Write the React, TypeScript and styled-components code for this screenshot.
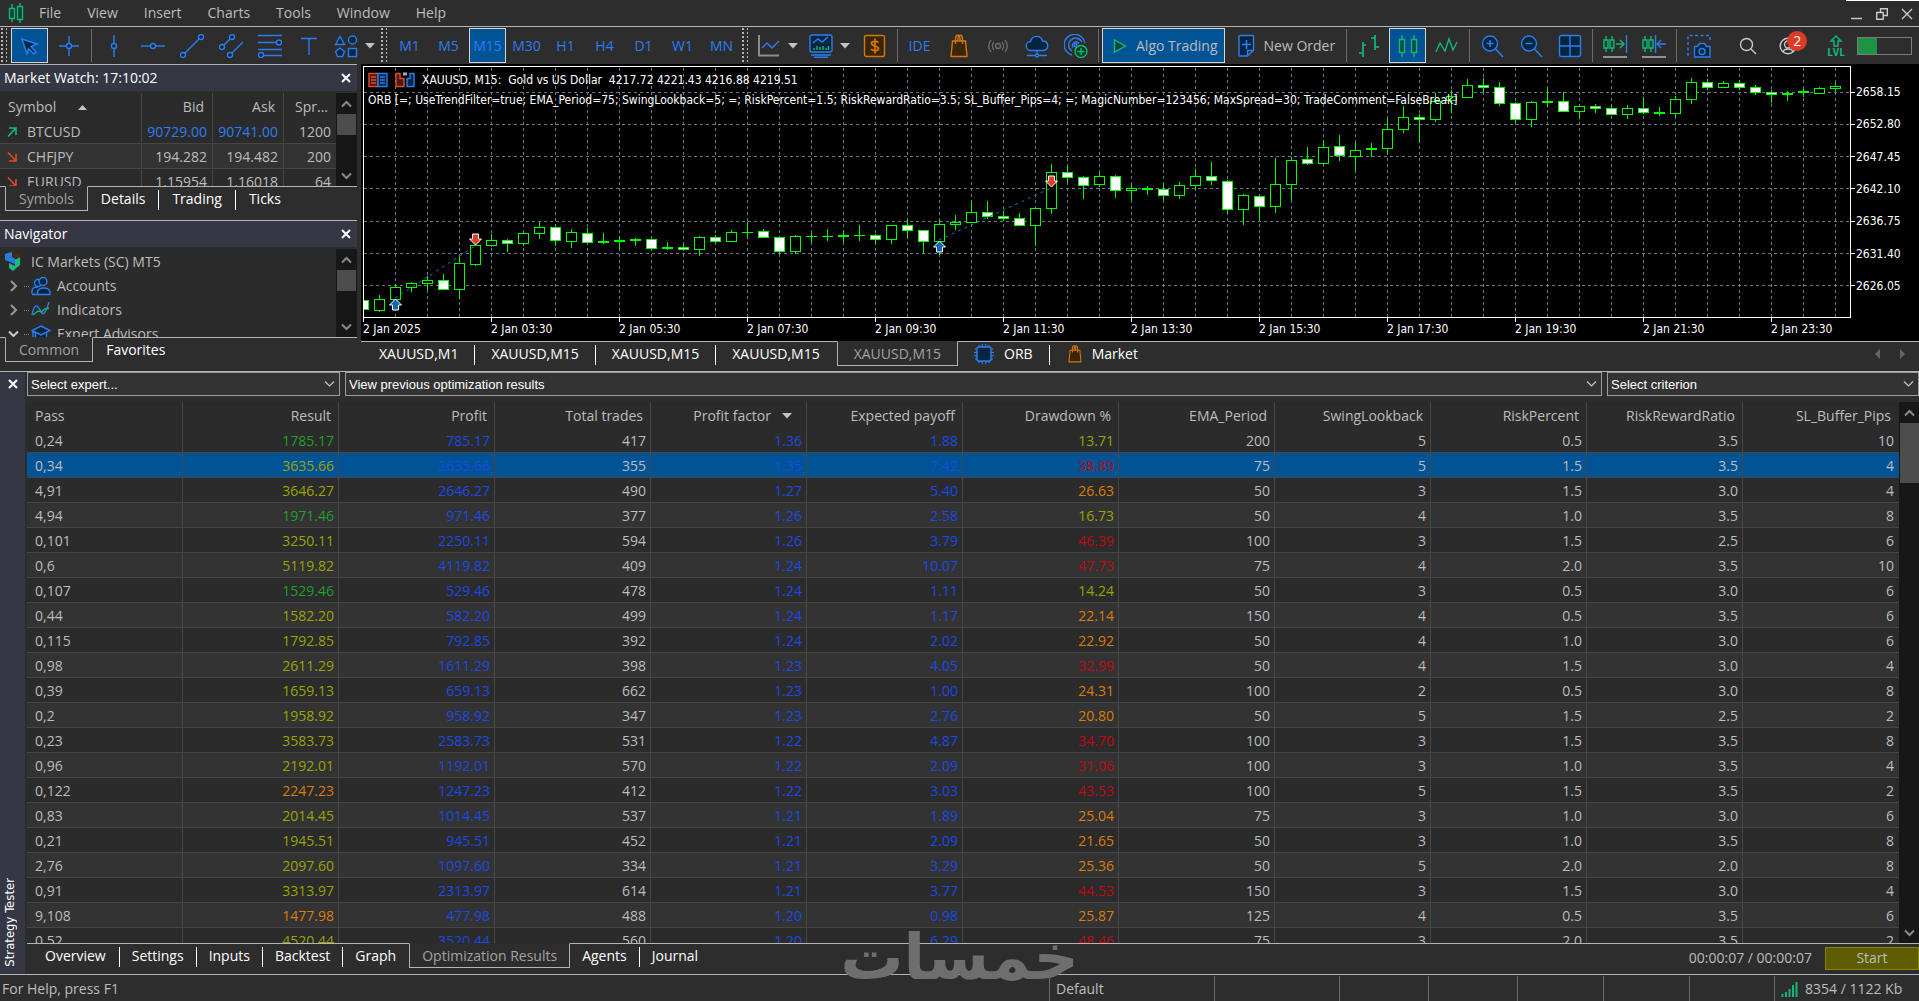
import React from "react";
import styled, { createGlobalStyle, css } from "styled-components";

const c = {
  bg: "#2d2d2d",
  panel: "#2b2b2b",
  alt: "#333333",
  grid: "#464646",
  line: "#b4b4b4",
  head: "#363744",
  text: "#bdbdbd",
  dim: "#a2a2a2",
  white: "#ffffff",
  sel: "#005496",
  blue: "#2b7df0",
  deep: "#04263f",
  green: "#13b877",
  orange: "#d2770f",
  brown: "#3a2506",
};

const ui = `"Open Sans", "Noto Sans", sans-serif`;
const cond = `"DejaVu Sans Condensed", "DejaVu Sans", sans-serif`;

const Global = createGlobalStyle`
  html, body { margin: 0; background: ${c.bg}; }
  * { box-sizing: border-box; }
  button, select, table { font: inherit; color: inherit; }
  button { background: none; border: 0; padding: 0; margin: 0; cursor: default; }
`;

const Page = styled.div`
  position: relative;
  display: flex;
  flex-direction: column;
  height: 100vh;
  overflow: hidden;
  background: ${c.bg};
  color: ${c.text};
  font: 14px/20px ${ui};
  white-space: nowrap;
`;

/* ---------- menu ---------- */
const MenuBar = styled.header`
  display: flex;
  align-items: center;
  height: 27px;
  padding-left: 8px;
  border-bottom: 1px solid ${c.line};
`;
const MenuItems = styled.nav`
  display: flex;
  margin-left: 2px;
`;
const MenuItem = styled.button`
  padding: 0 13px;
`;
const WindowButtons = styled.div`
  display: flex;
  align-items: center;
  align-self: stretch;
  gap: 13px;
  margin-left: auto;
  padding: 0 6px 0 5px;
  border-top: 1px solid ${c.white};
`;
const IconButton = styled.button`
  display: flex;
`;

/* ---------- toolbar ---------- */
const ToolBar = styled.div`
  display: flex;
  align-items: center;
  height: 37px;
`;
const Grip = styled.div`
  width: 10px;
  height: 36px;
  padding-left: 1px;
  display: flex;
  gap: 3px;
  &::before, &::after {
    content: "";
    width: 2px;
    background: repeating-linear-gradient(${c.line} 0 2px, transparent 2px 4px);
  }
  &::after { width: 1px; }
`;
const Tool = styled.button<{ $on?: boolean; $wide?: boolean }>`
  display: flex;
  align-items: center;
  justify-content: center;
  gap: 9px;
  width: ${(p) => (p.$wide ? "auto" : "37px")};
  height: 35px;
  padding: ${(p) => (p.$wide ? "0 6px 0 10px" : "0")};
  margin: 0 1px;
  border: 1px solid ${(p) => (p.$on ? "#d5d5d5" : "transparent")};
  background: ${(p) => (p.$on ? c.sel : "none")};
  svg { flex: none; }
`;
const Period = styled(Tool)`
  color: ${c.blue};
`;
const DropTool = styled.button`
  display: flex;
  align-items: center;
  gap: 7px;
  width: 52px;
  height: 35px;
  padding-left: 6px;
`;
const Sep = styled.div`
  width: 6px;
  height: 33px;
  padding-left: 3px;
  &::before {
    content: "";
    display: block;
    width: 1px;
    height: 100%;
    background: #6c6c6c;
  }
`;
const ToolRight = styled.div`
  display: flex;
  align-items: center;
  gap: 22px;
  margin-left: auto;
  padding-right: 7px;
`;
const Account = styled.button`
  position: relative;
  display: flex;
  width: 26px;
`;
const Badge = styled.span`
  position: absolute;
  top: -6px;
  left: 8px;
  width: 20px;
  height: 20px;
  border-radius: 50%;
  background: #dd3b26;
  color: ${c.white};
`;
const Level = styled.button`
  display: flex;
  flex-direction: column;
  align-items: center;
  color: ${c.green};
  font-size: 10px;
  line-height: 10px;
  font-weight: 700;
`;
const Battery = styled.div`
  width: 55px;
  height: 18px;
  margin-left: -10px;
  border: 1px solid #7d7d7d;
  &::before {
    content: "";
    display: block;
    width: 19px;
    height: 100%;
    background: #1d9443;
  }
`;

/* ---------- panels ---------- */
const Upper = styled.div`
  display: flex;
  flex: none;
  height: 307px;
`;
const Side = styled.aside`
  flex: none;
  width: 357px;
  margin-right: 4px;
`;
const Panel = styled.section`
  display: flex;
  flex-direction: column;
  border-top: 1px solid ${c.line};
`;
const PanelHead = styled.header`
  display: flex;
  align-items: center;
  justify-content: space-between;
  height: 26px;
  margin-bottom: 2px;
  padding: 0 6px 0 4px;
  background: ${c.head};
  color: ${c.white};
`;
const PanelBody = styled.div<{ $h: number }>`
  display: flex;
  height: ${(p) => p.$h}px;
  overflow: hidden;
  background: ${c.panel};
`;
const Scroll = styled.div<{ $thumb: number }>`
  flex: none;
  display: flex;
  flex-direction: column;
  align-items: center;
  width: ${(p) => (p.$thumb > 30 ? 20 : 21)}px;
  background: #171717;
  button {
    display: flex;
    align-items: center;
    justify-content: center;
    height: 21px;
  }
`;
const Thumb = styled.div<{ $h: number }>`
  width: 19px;
  height: ${(p) => p.$h}px;
  margin-bottom: auto;
  background: #4d4d4d;
`;

const TabRow = styled.div<{ $h: number; $x: number }>`
  display: flex;
  flex: none;
  align-items: flex-start;
  height: ${(p) => p.$h}px;
  padding-left: ${(p) => p.$x}px;
  border-top: 1px solid ${c.line};
  background: ${c.bg};
`;
const Tab = styled.button<{ $on?: boolean; $sep?: boolean; $pad?: number }>`
  display: flex;
  align-items: center;
  gap: 10px;
  padding: 0 ${(p) => p.$pad ?? 13}px 2px;
  color: ${c.white};
  height: 20px;
  margin-top: 3px;
  line-height: 18px;
  border-right: 1px solid ${(p) => (p.$sep ? c.white : "transparent")};
  ${(p) =>
    p.$on &&
    css`
      height: 25px;
      margin-top: -1px;
      padding-bottom: 0;
      color: ${c.dim};
      background: ${c.bg};
      border: 1px solid ${c.line};
      border-top-color: ${c.bg};
    `}
`;

/* ---------- market watch ---------- */
const Quotes = styled.table`
  flex: 1;
  width: 0;
  height: 101px;
  table-layout: fixed;
  border-collapse: separate;
  border-spacing: 0;
  th, td { height: 25px; padding: 1px 5px 0; text-align: right; font-weight: 400; border-right: 1px solid ${c.grid}; }
  th { height: 26px; padding: 2px 8px 0; }
  td { border-bottom: 1px solid ${c.grid}; }
  th:last-child, td:last-child { border-right: 0; }
  th:first-child, td:first-child { text-align: left; width: 142px; }
  td:first-child { padding-left: 7px; }
  th:nth-child(2), th:nth-child(3) { width: 71px; }
  tbody tr:nth-child(even) { background: ${c.alt}; }
`;
const QuoteName = styled.span`
  display: flex;
  align-items: center;
  gap: 10px;
`;
const SortHead = styled.span`
  display: inline-flex;
  align-items: center;
  gap: 22px;
`;
const BlueTd = styled.td<{ $blue?: boolean }>`
  color: ${(p) => (p.$blue ? c.blue : "inherit")};
`;

/* ---------- navigator ---------- */
const Tree = styled.ul`
  flex: 1;
  margin: 0;
  padding: 1px 0 0 4px;
  list-style: none;
`;
const TreeItem = styled.li<{ $root?: boolean }>`
  display: flex;
  align-items: center;
  height: 24px;
  gap: ${(p) => (p.$root ? 7 : 6)}px;
`;
const Dots = styled.span`
  width: 5px;
  margin-right: -4px;
  border-top: 1px dotted #888;
`;
const Twist = styled.button`
  display: flex;
  justify-content: center;
  width: 19px;
  margin-right: -5px;
`;

/* ---------- chart ---------- */
const ChartPane = styled.main`
  flex: 1;
  min-width: 0;
  display: flex;
  flex-direction: column;
`;
const Chart = styled.div`
  flex: 1;
  display: grid;
  grid-template-columns: minmax(0, 1fr) 68px;
  grid-template-rows: 252px 1fr;
  padding: 2px 0 0 2px;
  background: #000;
  color: ${c.white};
  font: 12px/16px ${cond};
`;
const Plot = styled.div`
  position: relative;
  border: 1px solid ${c.white};
  overflow: hidden;
  svg { display: block; }
`;
const ChartTitle = styled.div`
  position: absolute;
  left: 4px;
  top: 3px;
  white-space: pre;
`;
const TitleLine = styled.div`
  display: flex;
  align-items: center;
  gap: 7px;
  height: 20px;
  margin-bottom: 2px;
`;
const Prices = styled.div`
  display: flex;
  flex-direction: column;
  justify-content: space-between;
  height: 210px;
  margin-top: 18px;
`;
const Price = styled.div`
  display: flex;
  align-items: center;
  gap: 1px;
  &::before { content: ""; width: 4px; height: 1px; background: ${c.white}; }
`;
const Times = styled.div`
  display: flex;
  grid-column: 1 / 3;
`;
const Time = styled.div`
  flex: 0 0 128px;
  line-height: 14px;
  &::before { content: ""; display: block; width: 1px; height: 4px; background: ${c.white}; }
`;
const TabArrows = styled.div`
  display: flex;
  gap: 17px;
  margin: 5px 12px 0 auto;
`;

/* ---------- tester ---------- */
const Tester = styled.section`
  flex: 1;
  min-height: 0;
  display: flex;
  border-top: 1px solid ${c.line};
  border-bottom: 1px solid ${c.line};
`;
const Strip = styled.div`
  flex: none;
  display: flex;
  flex-direction: column;
  align-items: center;
  justify-content: space-between;
  width: 25px;
  margin-right: 2px;
  padding: 7px 0;
  background: ${c.head};
  color: ${c.white};
`;
const StripTitle = styled.h2`
  align-self: flex-start;
  margin: 0;
  font: 13px/20px ${cond};
  writing-mode: vertical-rl;
  transform: rotate(180deg);
`;
const TesterMain = styled.div`
  flex: 1;
  min-width: 0;
  display: flex;
  flex-direction: column;
`;
const Filters = styled.div`
  display: grid;
  grid-template-columns: 313px minmax(0, 1fr) 312px;
  gap: 5px;
  height: 30px;
`;
const SelectBox = styled.div`
  position: relative;
  height: 24px;
  svg { position: absolute; right: 5px; top: 8px; pointer-events: none; }
  select {
    appearance: none;
    display: block;
    width: 100%;
    height: 24px;
    padding: 1px 3px 0;
    color: ${c.white};
    background: ${c.alt};
    border: 1px solid #9c9c9c;
    border-radius: 0;
    font: 13px/20px "Liberation Sans", Arial, sans-serif;
  }
`;
const Results = styled.div`
  flex: 1 1 0;
  min-height: 0;
  display: flex;
  overflow: hidden;
  background: ${c.panel};
`;
const ResultTable = styled.table`
  flex: 1;
  width: 0;
  height: 551px;
  table-layout: fixed;
  border-collapse: separate;
  border-spacing: 0;
  th, td { height: 25px; padding: 2px 4px 0; text-align: right; font-weight: 400; border-right: 1px solid ${c.grid}; }
  th { height: 26px; padding: 2px 7px 0; }
  td { border-bottom: 1px solid ${c.grid}; }
  th:last-child, td:last-child { border-right: 0; padding-right: 5px; }
  th:last-child { padding-right: 8px; }
  th:first-child, td:first-child { text-align: left; padding-left: 8px; }
`;
const Row = styled.tr<{ $sel: boolean }>`
  &:nth-child(even) { background: ${(p) => (p.$sel ? c.sel : c.alt)}; }
`;
const Cell = styled.td<{ $color?: string }>`
  color: ${(p) => p.$color ?? "inherit"};
`;
const ProfitHead = styled(SortHead)`
  gap: 11px;
  padding-right: 7px;
`;
const Run = styled.div`
  display: flex;
  align-items: center;
  gap: 13px;
  height: 24px;
  margin: 2px 0 0 auto;
`;
const Start = styled.button`
  width: 94px;
  height: 23px;
  border: 1px solid #858500;
  background: #5d5d00;
  line-height: 20px;
`;
const Status = styled.footer`
  flex: none;
  display: flex;
  height: 26px;
  padding-top: 1px;
`;
const StatusCell = styled.div<{ $w?: number }>`
  display: flex;
  align-items: center;
  gap: 6px;
  ${(p) => (p.$w ? `flex: none; width: ${p.$w}px; border-left: 1px solid #6c6c6c; padding-left: 6px;` : "flex: 1; padding-left: 2px;")}
`;
const Mark = styled.div`
  position: absolute;
  left: 0;
  right: 0;
  bottom: 8px;
  text-align: center;
  pointer-events: none;
  color: #6e6e6e;
  font: 700 63px/70px "DejaVu Sans", sans-serif;
`;

/* ---------- icons ---------- */
type Kids = { children?: React.ReactNode; w?: number; h?: number; s?: string; f?: string };
const I = ({ children, w = 24, h = 24, s = c.blue, f = "none" }: Kids) => (
  <svg width={w} height={h} viewBox={`0 0 ${w} ${h}`} fill={f} stroke={s} strokeWidth="1.4" aria-hidden="true">
    {children}
  </svg>
);
const Logo = () => (
  <I w={16} h={20} s={c.green} f="#07442c">
    <path d="M4 1v4M4 16v3M12 0v3M12 17v3M1.500 5.500h5v10h-5zM9.500 3.500h5v13h-5z" />
  </I>
);
const Close = () => (
  <I w={10} h={10} s="#fff"><path d="M1 1l8 8M9 1l-8 8" strokeWidth="2" /></I>
);
const Down = () => <I w={10} h={6} s="none" f="#c4c4c4"><path d="M0 0h10l-5 5.500z" /></I>;
const SortUp = () => <I w={9} h={5} s="none" f="#c4c4c4"><path d="M0 5h9L4.500 0z" /></I>;
const Chev = ({ up, color = "#8a8a8a" }: { up?: boolean; color?: string }) => (
  <I w={11} h={8} s={color}><path d={up ? "M1 6.500l4.500-4.500 4.500 4.500" : "M1 1.500l4.500 4.500L10 1.500"} strokeWidth="2" /></I>
);
const Thin = () => <I w={11} h={8} s="#c4c4c4"><path d="M1 1.500l4.500 4.500L10 1.500" strokeWidth="1.200" /></I>;
const Cursor = () => <I f={c.deep}><path d="M4 5l15 5-6 2.500 5 5.500-2 2-5.500-5.500L9 20z" /></I>;
const Cross = () => <I f={c.deep}><path d="M12 2v20M2 12h20" /><circle cx="12" cy="12" r="2.500" /></I>;
const VLine = () => <I f={c.deep}><path d="M12 1v22" /><circle cx="12" cy="12" r="2.500" /></I>;
const HLine = () => <I f={c.deep}><path d="M0 12h24" /><circle cx="12" cy="12" r="2.500" /></I>;
const Trend = () => <I f={c.deep}><path d="M4 20L20 4" /><circle cx="3" cy="21" r="2.500" /><circle cx="21" cy="3" r="2.500" /></I>;
const Channel = () => (
  <I f={c.deep}><path d="M4 12l8-8M12 20L24 8" /><circle cx="3" cy="13" r="2.500" /><circle cx="13" cy="3" r="2.500" /><circle cx="11" cy="21" r="2.500" /></I>
);
const Fib = () => (
  <I f={c.deep}><path d="M0 1.500h24M0 8.500h19M0 15.500h24M5 21.500h19" /><circle cx="21" cy="8.500" r="2.500" /><circle cx="3" cy="21" r="2.500" /></I>
);
const TIcon = () => <I><path d="M4 4.500h16M12 4.500V21" /></I>;
const Shapes = () => (
  <I f={c.deep}><path d="M6 2.500l4.500 8h-9zM14.500 14.500h8v8h-8zM6 14l4.500 3.500-2 5h-5l-2-5z" /><circle cx="18.500" cy="6" r="4" /></I>
);
const LineChart = () => (
  <I><path d="M2 1v20.500h20" stroke="#8c8c8c" strokeWidth="2" /><path d="M5 14l5-5 5 5 7-7" /></I>
);
const Monitor = () => (
  <I><rect x="1" y="1" width="22" height="17" rx="2" fill={c.deep} /><path d="M2 21h20M5 23.300h14M4 9l5-4 4 3 6-5" />
    <path d="M5 16v-2M8 16v-4M11 16v-3M14 16v-4M17 16v-2M19.500 16v-4" stroke={c.green} /></I>
);
const Dollar = () => (
  <I s={c.orange} f={c.brown}><rect x="1.500" y="1.500" width="20" height="21" rx="2" />
    <path d="M15.500 8.500c-1-1.500-7-2-7 1s7 2 7 5-6 2.500-7.500.5M12 4.500v15" fill="none" strokeWidth="1.800" /></I>
);
const Bag = ({ w = 18, h = 24 }: { w?: number; h?: number }) => (
  <svg width={w} height={h} viewBox="0 0 18 24" fill={c.brown} stroke={c.orange} strokeWidth="1.400" aria-hidden="true">
    <path d="M2.500 7h13L17 22.500H1z" />
    <path d="M5.500 10V4.500c0-4.500 4.500-4.500 4.500 0V7M8 7V4.500c0-4.500 4.500-4.500 4.500 0V10" fill="none" />
  </svg>
);
const Signal = () => (
  <I s="#6c6c6c"><circle cx="12" cy="12" r="2.500" /><path d="M8 8a6 6 0 000 8M16 8a6 6 0 010 8M5 6a9 9 0 000 12M19 6a9 9 0 010 12" /></I>
);
const Cloud = () => (
  <I f={c.deep}><path d="M6 16.500a4.500 4.500 0 01-.5-9C7 1 16 .5 17.500 7c7 0 6.500 9.500 1 9.500zM12 16.500V20M2 21.500h20" /><circle cx="12" cy="21.500" r="1.500" /></I>
);
const Radar = () => (
  <I><path d="M8 21A10.500 10.500 0 1121 9M8 17a7 7 0 1110-9M9 13.500a3.500 3.500 0 116-4" /><circle cx="11.500" cy="11" r="1.500" />
    <circle cx="17" cy="17.500" r="6" stroke={c.green} fill="#063d29" /><path d="M17 14v7M13.500 17.500h7" stroke={c.green} /></I>
);
const Play = () => <I w={14} h={16} s={c.green} f="#0b4a3a"><path d="M1.500 2l11 6-11 6z" /></I>;
const Order = () => (
  <I w={17} f={c.deep}><path d="M2 1.500h13.500v15l-6 5.500H2a1 1 0 01-1-1V2.500a1 1 0 011-1zM15.500 16.500h-6V22" /><path d="M8.500 6v9M4 10.500h9" strokeWidth="1.600" /></I>
);
const Bars = () => <I s={c.green}><path d="M6 8v15M2 19h4M6 11h3M18 1v15M14 4h4M18 13h4" strokeWidth="1.700" /></I>;
const Candles = () => <I s={c.green} f="#0a4a44"><path d="M6 1v5M6 18v5M18 1v5M18 18v5M3.500 5.500h5v13h-5zM15.500 5.500h5v13h-5z" /></I>;
const Wave = () => <I s={c.green}><path d="M1 18l4-9 5 8 4-12 4 11 4-8" /></I>;
const Lens = ({ plus }: { plus?: boolean }) => (
  <I><circle cx="10" cy="9.500" r="7.500" fill={c.deep} /><path d={`M15.500 15l7.500 8M6.500 9.500h7${plus ? "M10 6v7" : ""}`} strokeWidth="1.600" /></I>
);
const Tile = () => <I f={c.deep}><rect x="1.500" y="1.500" width="21" height="21" rx="2" /><path d="M12 1.500v21M1.500 12h21" /></I>;
const Shift = ({ back }: { back?: boolean }) => (
  <I w={26} h={26} s={c.green}>
    <path d="M4 3v4M4 15v4M10 3v4M10 15v4M2 7h4v8H2zM8 7h4v8H8z" fill="#07442c" />
    {back ? <path d="M14.500 2v18M25 11h-8M20 7l-4 4 4 4" stroke={c.blue} /> : <path d="M14 11h7M18 7l4 4-4 4" />}
    {!back && <path d="M24.500 2v18" stroke={c.blue} />}
    <path d="M1 24h24" stroke="#aaa" strokeWidth="1.600" />
  </I>
);
const Camera = () => (
  <I><path d="M1 22V1.500h22V8" strokeDasharray="3 2.500" /><path d="M7.500 12.500h3l2-3h5l2 3h3.500v10.500h-15.500z" fill={c.deep} /><circle cx="15" cy="17.500" r="3" /></I>
);
const Search = () => <I w={18} h={18} s="#c8c8c8"><circle cx="7.500" cy="7.500" r="6" /><path d="M12 12l5 5" /></I>;
const Person = () => (
  <I w={18} h={18} s="#c8c8c8"><circle cx="9" cy="9" r="7.800" /><circle cx="9" cy="7.500" r="3.500" /><path d="M4 15c1-4 9-4 10 0" /></I>
);
const LvlArrow = () => <I w={14} h={12} s={c.green}><path d="M7 1l5 5H9v5H5V6H2z" /></I>;
const Chip = () => (
  <I w={20} h={20} f={c.deep}><path d="M5 1v18M8.300 0v20M11.700 0v20M15 1v18M1 5h18M0 8.300h20M0 11.700h20M1 15h18" strokeWidth="1.200" /><rect x="3" y="3" width="14" height="14" rx="2" /></I>
);
const QuoteArrow = ({ up }: { up?: boolean }) => (
  <I w={10} h={10} s={up ? c.green : "#dd4a2c"}><path d={up ? "M1 9.500L9 1M2 1h7v7" : "M1 .5L9 9M9 2v7H2"} strokeWidth="1.600" /></I>
);
const Broker = () => (
  <I w={20} h={20} s="none">
    <path d="M8 1l9 1v5l-9-3z" fill="#4a2c0c" />
    <path d="M1 2l6-2 1 1v4l5 3v5L1 8z" fill="#2b7ad6" />
    <path d="M11 8l5-3v8l-7 6-4-3v-5l6 3z" fill="#15b983" />
  </I>
);
const People = () => (
  <I w={20} h={20} f={c.deep}><circle cx="7" cy="7" r="3.500" /><path d="M1 18v-3c0-3 3-4 6-4" /><circle cx="12" cy="5.500" r="4" /><path d="M6.500 18.500v-2c0-6 12.500-6 12.500 0v2zM1 18.500h6" /></I>
);
const Indic = () => (
  <I w={20} h={20}><path d="M1 15c2-11 5-11 8-5s5 5 9-8" /><path d="M2 15l5-4 3 1 4-3 4-1" stroke={c.green} /></I>
);
const Cap = () => <I w={20} h={20} f={c.deep}><path d="M10 2l9 4.500-9 4.500-9-4.500zM4.500 9v7c3 2 8 2 11 0V9M2 7v8" /></I>;

/* ---------- candle data: type, high, low, body top, body bottom ---------- */
const candles: [string, number, number, number, number][] = [
  ["f",300,310,300,310],["h",295,312,299,311],["h",285,300,287,300],["h",282,292,283,288],["h",276,290,280,284],["f",274,290,280,290],
  ["h",256,299,263,290],["h",245,266,245,265],["h",234,247,240,246],["f",239,252,240,244],["h",232,246,233,244],["h",222,239,227,234],
  ["f",226,246,227,241],["h",229,248,232,242],["f",228,243,233,243],["d",233,244,241,243],["d",236,249,240,242],["d",238,246,239,241],
  ["f",239,250,239,249],["d",242,250,247,249],["f",244,250,247,250],["h",236,256,237,250],["f",235,243,237,242],["h",230,242,232,242],
  ["d",222,237,232,233],["f",229,238,231,238],["f",237,253,237,252],["h",235,254,236,252],["d",233,242,236,237],["d",229,241,236,237],
  ["d",231,242,235,237],["d",225,241,235,236],["f",234,244,235,240],["h",225,244,225,240],["f",219,238,225,231],["f",230,254,230,242],
  ["h",220,255,224,242],["h",215,230,222,225],["h",202,223,212,223],["f",201,219,212,217],["f",211,221,216,219],["f",213,226,218,226],
  ["h",208,246,208,226],["h",164,214,172,209],["f",167,183,172,178],["f",176,199,177,186],["h",173,187,176,185],["f",175,198,176,191],
  ["h",184,200,188,191],["d",186,195,188,190],["f",184,200,189,196],["h",182,199,185,196],["h",169,189,176,186],["f",162,185,176,181],
  ["f",180,213,181,210],["h",194,225,195,210],["f",195,220,196,207],["h",158,213,184,207],["h",157,200,160,185],["f",147,165,159,164],
  ["h",140,165,147,164],["f",135,161,146,156],["h",143,171,150,157],["d",143,157,148,150],["h",119,153,129,149],["h",106,133,117,130],
  ["f",114,142,117,120],["h",93,122,101,120],["h",90,113,96,101],["h",79,98,85,98],["f",78,93,85,88],["f",82,106,87,104],
  ["f",102,123,103,120],["h",101,127,102,120],["d",88,107,101,103],["f",92,112,101,112],["h",104,119,106,112],["f",104,113,106,109],
  ["f",105,115,108,115],["h",105,119,108,115],["f",97,114,108,113],["d",107,116,112,114],["h",96,117,99,114],["h",78,104,82,100],
  ["f",79,90,82,88],["h",81,88,83,88],["f",80,90,83,88],["f",85,95,87,93],["f",90,103,92,95],["d",91,101,93,95],["d",89,97,91,93],
  ["h",87,94,88,94],["h",83,92,86,89],
];
const gridX = Array.from({ length: 46 }, (_, i) => 395 + i * 32);
const gridY = [92, 124, 156, 188, 221, 253, 285];
const lime = "#00ff00";

const BuyMark = ({ x, y }: { x: number; y: number }) => (
  <path d={`M${x} ${y}l6 6h-3v5h-6v-5h-3z`} fill="#1167b1" stroke="#fff" />
);
const SellMark = ({ x, y }: { x: number; y: number }) => (
  <path d={`M${x} ${y}l6-6h-3v-5h-6v5h-3z`} fill="#e03c28" stroke="#fff" />
);

const CandleChart = () => (
  <svg width="100%" height="250" role="img" aria-label="XAUUSD M15 candles">
    <g transform="translate(-364 -67)" shapeRendering="crispEdges">
      <g stroke="#6c7b8a" strokeWidth="1" strokeDasharray="3 3">
        {gridX.map((x) => <line key={x} x1={x + 0.5} x2={x + 0.5} y1="68" y2="317" />)}
        {gridY.map((y) => <line key={y} x1="364" x2="1850" y1={y + 0.5} y2={y + 0.5} />)}
      </g>
      {candles.map(([t, hi, lo, a, b], i) => {
        const x = 363 + i * 16;
        return (
          <g key={i}>
            <rect x={x} y={hi} width="1" height={lo - hi} fill={lime} />
            <rect x={x - 5} y={a} width="11" height={b - a} fill={lime} />
            {t !== "d" && <rect x={x - 4} y={a + 1} width="9" height={b - a - 2} fill={t === "f" ? "#fff" : "#000"} />}
          </g>
        );
      })}
    </g>
    <g transform="translate(-364 -67)">
      <path d="M395 298L475 246M939 240L1051 188" stroke="#1f6fb5" strokeWidth="1" strokeDasharray="3 4" />
      <BuyMark x={395.5} y={299} />
      <SellMark x={475.5} y={245} />
      <BuyMark x={939.5} y={241} />
      <SellMark x={1051.5} y={187} />
    </g>
  </svg>
);

/* ---------- results ---------- */
const G = "#229f2c", Y = "#9aa300", O = "#da7d08", R = "#bd0a12", B = "#1b49e4";
const headers = ["Pass", "Result", "Profit", "Total trades", "Profit factor", "Expected payoff", "Drawdown %", "EMA_Period", "SwingLookback", "RiskPercent", "RiskRewardRatio", "SL_Buffer_Pips"];
const results: [string, string, string][] = [
  ["0,24 1785.17 785.17 417 1.36 1.88 13.71 200 5 0.5 3.5 10", G, Y],
  ["0,34 3635.66 2635.66 355 1.35 7.42 38.89 75 5 1.5 3.5 4", Y, R],
  ["4,91 3646.27 2646.27 490 1.27 5.40 26.63 50 3 1.5 3.0 4", Y, O],
  ["4,94 1971.46 971.46 377 1.26 2.58 16.73 50 4 1.0 3.5 8", G, Y],
  ["0,101 3250.11 2250.11 594 1.26 3.79 46.39 100 3 1.5 2.5 6", Y, R],
  ["0,6 5119.82 4119.82 409 1.24 10.07 47.73 75 4 2.0 3.5 10", Y, R],
  ["0,107 1529.46 529.46 478 1.24 1.11 14.24 50 3 0.5 3.0 6", G, Y],
  ["0,44 1582.20 582.20 499 1.24 1.17 22.14 150 4 0.5 3.5 6", Y, O],
  ["0,115 1792.85 792.85 392 1.24 2.02 22.92 50 4 1.0 3.0 6", Y, O],
  ["0,98 2611.29 1611.29 398 1.23 4.05 32.99 50 4 1.5 3.0 4", Y, R],
  ["0,39 1659.13 659.13 662 1.23 1.00 24.31 100 2 0.5 3.0 8", Y, O],
  ["0,2 1958.92 958.92 347 1.23 2.76 20.80 50 5 1.5 2.5 2", Y, O],
  ["0,23 3583.73 2583.73 531 1.22 4.87 34.70 100 3 1.5 3.5 8", Y, R],
  ["0,96 2192.01 1192.01 570 1.22 2.09 31.06 100 3 1.0 3.5 4", Y, R],
  ["0,122 2247.23 1247.23 412 1.22 3.03 43.53 100 5 1.5 3.5 2", O, R],
  ["0,83 2014.45 1014.45 537 1.21 1.89 25.04 75 3 1.0 3.0 6", Y, O],
  ["0,21 1945.51 945.51 452 1.21 2.09 21.65 50 3 1.0 3.5 8", Y, O],
  ["2,76 2097.60 1097.60 334 1.21 3.29 25.36 50 5 2.0 2.0 8", Y, O],
  ["0,91 3313.97 2313.97 614 1.21 3.77 44.53 150 3 1.5 3.0 4", Y, R],
  ["9,108 1477.98 477.98 488 1.20 0.98 25.87 125 4 0.5 3.5 6", O, O],
  ["0,52 4520.44 3520.44 560 1.20 6.29 48.46 75 3 2.0 3.5 2", Y, R],
];
const cellColor = (i: number, res: string, dd: string) =>
  i === 1 ? res : i === 6 ? dd : i === 2 || i === 4 || i === 5 ? B : undefined;

const ScrollBar = ({ thumb }: { thumb: number }) => (
  <Scroll $thumb={thumb}>
    <button aria-label="Scroll up"><Chev up /></button>
    <Thumb $h={thumb} />
    <button aria-label="Scroll down"><Chev /></button>
  </Scroll>
);

const drawTools: [string, () => React.JSX.Element][] = [
  ["Vertical line", VLine], ["Horizontal line", HLine], ["Trendline", Trend], ["Channel", Channel], ["Fibonacci", Fib], ["Text", TIcon],
];

export default function App() {
  return (
    <Page>
      <Global />
      <MenuBar>
        <Logo />
        <MenuItems>
          {["File", "View", "Insert", "Charts", "Tools", "Window", "Help"].map((m) => <MenuItem key={m}>{m}</MenuItem>)}
        </MenuItems>
        <WindowButtons>
          <IconButton aria-label="Minimize"><I w={12} h={12} s="#ccc"><path d="M0 10.500h11" /></I></IconButton>
          <IconButton aria-label="Restore"><I w={12} h={12} s="#ccc"><path d="M4.500 4V.7h6.800v6.800H7.500M.7 4.500h6.500v6.800H.7z" /></I></IconButton>
          <IconButton aria-label="Close"><I w={12} h={12} s="#ccc"><path d="M1 1l10 10M11 1L1 11" /></I></IconButton>
        </WindowButtons>
      </MenuBar>

      <ToolBar>
        <Grip />
        <Tool $on aria-label="Cursor"><Cursor /></Tool>
        <Tool aria-label="Crosshair"><Cross /></Tool>
        <Sep />
        {drawTools.map(([n, Ic]) => <Tool key={n} aria-label={n}><Ic /></Tool>)}
        <DropTool aria-label="Objects"><Shapes /><Down /></DropTool>
        <Grip />
        {["M1", "M5", "M15", "M30", "H1", "H4", "D1", "W1", "MN"].map((p) => <Period key={p} $on={p === "M15"}>{p}</Period>)}
        <Grip />
        <DropTool aria-label="Chart type"><LineChart /><Down /></DropTool>
        <DropTool aria-label="Templates"><Monitor /><Down /></DropTool>
        <Tool aria-label="Quotes"><Dollar /></Tool>
        <Sep />
        <Period>IDE</Period>
        <Tool aria-label="Market"><Bag /></Tool>
        <Tool aria-label="Signals"><Signal /></Tool>
        <Tool aria-label="VPS"><Cloud /></Tool>
        <Tool aria-label="Copy"><Radar /></Tool>
        <Sep />
        <Tool $on $wide><Play />Algo Trading</Tool>
        <Tool $wide><Order />New Order</Tool>
        <Sep />
        <Tool aria-label="Bars"><Bars /></Tool>
        <Tool $on aria-label="Candles"><Candles /></Tool>
        <Tool aria-label="Line"><Wave /></Tool>
        <Sep />
        <Tool aria-label="Zoom in"><Lens plus /></Tool>
        <Tool aria-label="Zoom out"><Lens /></Tool>
        <Tool aria-label="Tile windows"><Tile /></Tool>
        <Sep />
        <Tool aria-label="Scroll to end"><Shift /></Tool>
        <Tool aria-label="Shift chart"><Shift back /></Tool>
        <Sep />
        <Tool aria-label="Screenshot"><Camera /></Tool>
        <ToolRight>
          <IconButton aria-label="Search"><Search /></IconButton>
          <Account aria-label="Account"><Person /><Badge>2</Badge></Account>
          <Level><LvlArrow />LVL</Level>
          <Battery />
        </ToolRight>
      </ToolBar>

      <Upper>
        <Side>
          <Panel>
            <PanelHead><span>Market Watch: 17:10:02</span><IconButton aria-label="Close Market Watch"><Close /></IconButton></PanelHead>
            <PanelBody $h={93}>
              <Quotes>
                <thead>
                  <tr><th><SortHead>Symbol<SortUp /></SortHead></th><th>Bid</th><th>Ask</th><th>Spr...</th></tr>
                </thead>
                <tbody>
                  {[["BTCUSD", "90729.00", "90741.00", "1200"], ["CHFJPY", "194.282", "194.482", "200"], ["EURUSD", "1.15954", "1.16018", "64"]].map((q, i) => (
                    <tr key={q[0]}>
                      <td><QuoteName><QuoteArrow up={i === 0} />{q[0]}</QuoteName></td>
                      <BlueTd $blue={i === 0}>{q[1]}</BlueTd>
                      <BlueTd $blue={i === 0}>{q[2]}</BlueTd>
                      <td>{q[3]}</td>
                    </tr>
                  ))}
                </tbody>
              </Quotes>
              <ScrollBar thumb={21} />
            </PanelBody>
            <TabRow $h={34} $x={5}>
              <Tab $on>Symbols</Tab><Tab $sep>Details</Tab><Tab $sep>Trading</Tab><Tab>Ticks</Tab>
            </TabRow>
          </Panel>
          <Panel>
            <PanelHead><span>Navigator</span><IconButton aria-label="Close Navigator"><Close /></IconButton></PanelHead>
            <PanelBody $h={88}>
              <Tree>
                <TreeItem $root><Broker />IC Markets (SC) MT5</TreeItem>
                <TreeItem><Twist aria-label="Expand"><I w={8} h={12} s="#999"><path d="M1 1l5 5-5 5" strokeWidth="2" /></I></Twist><Dots /><People />Accounts</TreeItem>
                <TreeItem><Twist aria-label="Expand"><I w={8} h={12} s="#999"><path d="M1 1l5 5-5 5" strokeWidth="2" /></I></Twist><Dots /><Indic />Indicators</TreeItem>
                <TreeItem><Twist aria-label="Collapse"><Chev color="#ccc" /></Twist><Dots /><Cap />Expert Advisors</TreeItem>
              </Tree>
              <ScrollBar thumb={21} />
            </PanelBody>
            <TabRow $h={34} $x={5}><Tab $on>Common</Tab><Tab>Favorites</Tab></TabRow>
          </Panel>
        </Side>

        <ChartPane>
          <Chart>
            <Plot>
              <CandleChart />
              <ChartTitle>
                <TitleLine>
                  <I w={20} h={16} s="#e0492c" f="#4a1c10"><path d="M1 1.500h9v13H1zM3 5h5M3 8h5M3 11h5" /><path d="M10 1.500h9v13h-9zM12 5h5M12 8h5M12 11h5" stroke={c.blue} fill={c.deep} /></I>
                  <I w={20} h={16} s="#e0492c" f="#4a1c10"><path d="M1 1.500h4v5h4v8H1z" /><path d="M19 1.500h-4v5h-3v8h7z" stroke={c.blue} fill={c.deep} /><path d="M8 2h4" stroke="#aaa" strokeWidth="3" /></I>
                  <span>XAUUSD, M15:  Gold vs US Dollar  4217.72 4221.43 4216.88 4219.51</span>
                </TitleLine>
                <div>ORB [=; UseTrendFilter=true; EMA_Period=75; SwingLookback=5; =; RiskPercent=1.5; RiskRewardRatio=3.5; SL_Buffer_Pips=4; =; MagicNumber=123456; MaxSpread=30; TradeComment=FalseBreak]</div>
              </ChartTitle>
            </Plot>
            <Prices>
              {["2658.15", "2652.80", "2647.45", "2642.10", "2636.75", "2631.40", "2626.05"].map((p) => <Price key={p}>{p}</Price>)}
            </Prices>
            <Times>
              {["2025", "03:30", "05:30", "07:30", "09:30", "11:30", "13:30", "15:30", "17:30", "19:30", "21:30", "23:30"].map((t) => <Time key={t}>2 Jan {t}</Time>)}
            </Times>
          </Chart>
          <TabRow $h={30} $x={2}>
            <Tab $pad={16} $sep>XAUUSD,M1</Tab>
            <Tab $pad={16} $sep>XAUUSD,M15</Tab>
            <Tab $pad={16} $sep>XAUUSD,M15</Tab>
            <Tab $pad={16}>XAUUSD,M15</Tab>
            <Tab $pad={16} $on>XAUUSD,M15</Tab>
            <Tab $pad={16} $sep><Chip />ORB</Tab>
            <Tab $pad={18}><Bag w={14} h={18} />Market</Tab>
            <TabArrows>
              <I w={8} h={14} s="none" f="#666"><path d="M6 2v10L1 7z" /></I>
              <I w={8} h={14} s="none" f="#666"><path d="M1 2v10l5-5z" /></I>
            </TabArrows>
          </TabRow>
        </ChartPane>
      </Upper>

      <Tester>
        <Strip>
          <IconButton aria-label="Close Strategy Tester"><Close /></IconButton>
          <StripTitle>Strategy Tester</StripTitle>
        </Strip>
        <TesterMain>
          <Filters>
            {[["Expert", "Select expert..."], ["Mode", "View previous optimization results"], ["Criterion", "Select criterion"]].map(([l, v]) => (
              <SelectBox key={l}><select aria-label={l}><option>{v}</option></select><Thin /></SelectBox>
            ))}
          </Filters>
          <Results>
            <ResultTable>
              <thead>
                <tr>{headers.map((h) => <th key={h}>{h === "Profit factor" ? <ProfitHead>{h}<Down /></ProfitHead> : h}</th>)}</tr>
              </thead>
              <tbody>
                {results.map(([line, res, dd], r) => (
                  <Row key={r} $sel={r === 1}>
                    {line.split(" ").map((v, i) => <Cell key={i} $color={cellColor(i, res, dd)}>{v}</Cell>)}
                  </Row>
                ))}
              </tbody>
            </ResultTable>
            <ScrollBar thumb={60} />
          </Results>
          <TabRow $h={31} $x={5}>
            <Tab $pad={13} $sep>Overview</Tab><Tab $pad={12} $sep>Settings</Tab><Tab $pad={12} $sep>Inputs</Tab><Tab $pad={12} $sep>Backtest</Tab><Tab $pad={12}>Graph</Tab>
            <Tab $pad={12} $on>Optimization Results</Tab><Tab $pad={12} $sep>Agents</Tab><Tab $pad={12}>Journal</Tab>
            <Run><span>00:00:07 / 00:00:07</span><Start>Start</Start></Run>
          </TabRow>
        </TesterMain>
      </Tester>

      <Status>
        <StatusCell>For Help, press F1</StatusCell>
        <StatusCell $w={165}>Default</StatusCell>
        <StatusCell $w={125} /><StatusCell $w={89} /><StatusCell $w={89} />
        <StatusCell $w={86} /><StatusCell $w={86} /><StatusCell $w={85} />
        <StatusCell $w={145}>
          <I w={18} h={16} s={c.green}><path d="M1.500 16v-3M5 16v-5M8.500 16V8M12 16V4M15.500 16V1" strokeWidth="2" /></I>
          8354 / 1122 Kb
        </StatusCell>
      </Status>
      <Mark lang="ar">خمسات</Mark>
    </Page>
  );
}
